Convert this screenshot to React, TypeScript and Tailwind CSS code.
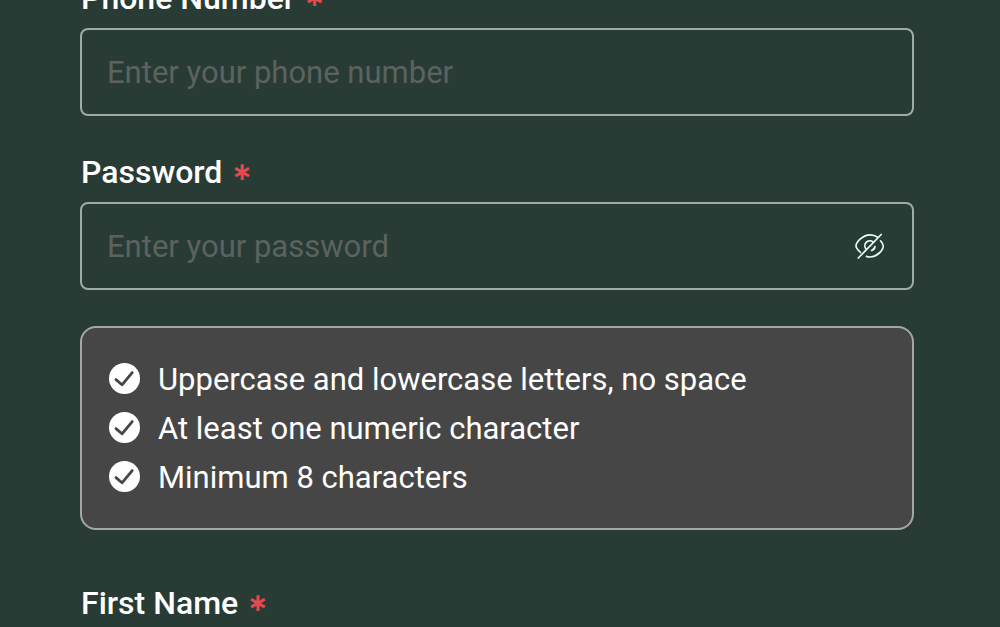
import { useState } from "react";
import type { ReactNode } from "react";

const rules = [
  "Uppercase and lowercase letters, no space",
  "At least one numeric character",
  "Minimum 8 characters",
];

function FieldLabel({ htmlFor, children }: { htmlFor: string; children: ReactNode }) {
  return (
    <label htmlFor={htmlFor} className="flex h-10 items-center gap-[9px] pl-px text-[32px] leading-10 font-medium text-white">
      {children}
      <span className="font-['DejaVu_Sans',sans-serif] text-[25px] font-bold text-[#e5484d]">∗</span>
    </label>
  );
}

const inputClass =
  "h-[88px] w-full rounded-lg border-2 border-[#a0aaa6] bg-transparent px-[25px] text-[31px] text-white outline-none placeholder:text-[#5c6260]";

function EyeOffIcon() {
  return (
    <svg viewBox="0 0 32 28" className="h-7 w-8" fill="none" stroke="#e6fff3" strokeWidth="1.7" strokeLinecap="round" strokeLinejoin="round">
      <path d="M6.5 20.5C4.3 18.4 2 15.8 2 14C2 10 9 2.8 16 2.8C19 2.8 21.6 3.7 23.8 5.2" />
      <path d="M26.5 8.8C28.2 10.8 29.3 12.6 29.3 14C29.3 18 23 25 16 25C14.7 25 13.5 24.8 12.5 24.4" />
      <path d="M12.2 17.2A5 5 0 0 1 19 9.9" />
      <path d="M21 14.5A5 5 0 0 1 17.5 18.5" />
      <path d="M4.3 26L27.2 2.5" />
    </svg>
  );
}

function CheckIcon() {
  return (
    <svg viewBox="0 0 32 32" className="size-8 shrink-0" fill="none" aria-hidden="true">
      <circle cx="16.5" cy="15.5" r="15.5" fill="white" />
      <path d="M8 16.6L14 21.8L24.2 9.6" stroke="#464646" strokeWidth="2.8" strokeLinecap="round" strokeLinejoin="round" />
    </svg>
  );
}

export default function App() {
  const [visible, setVisible] = useState(false);
  return (
    <main className="h-screen overflow-hidden bg-[#283c35] pr-[86px] pl-20 font-[Roboto,sans-serif]">
      <form className="-mt-[22px] flex flex-col">
        <div className="flex flex-col gap-2.5">
          <FieldLabel htmlFor="phone">Phone Number</FieldLabel>
          <input id="phone" type="tel" placeholder="Enter your phone number" className={inputClass} />
        </div>

        <div className="mt-9 flex flex-col gap-2.5">
          <FieldLabel htmlFor="password">Password</FieldLabel>
          <div className="relative">
            <input id="password" type={visible ? "text" : "password"} placeholder="Enter your password" className={inputClass} />
            <button
              type="button"
              aria-label="Toggle password visibility"
              onClick={() => setVisible(!visible)}
              className="absolute inset-y-0 right-7 flex items-center"
            >
              <EyeOffIcon />
            </button>
          </div>
        </div>

        <ul className="mt-9 rounded-2xl border-2 border-[#a3a8a6] bg-[#464646] px-[26px] pt-[26px] pb-[27px]">
          {rules.map((rule) => (
            <li key={rule} className="flex h-[49px] items-center gap-[18px] text-[31px] text-white">
              <CheckIcon />
              <span className="pt-[3px]">{rule}</span>
            </li>
          ))}
        </ul>

        <div className="mt-[53px] flex flex-col gap-2.5">
          <FieldLabel htmlFor="first-name">First Name</FieldLabel>
          <input id="first-name" type="text" className={inputClass} />
        </div>
      </form>
    </main>
  );
}
